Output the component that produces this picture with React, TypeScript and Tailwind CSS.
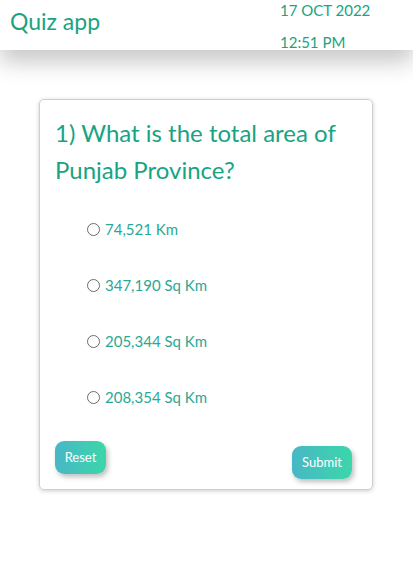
import React from "react";

const options = ["74,521 Km", "347,190 Sq Km", "205,344 Sq Km", "208,354 Sq Km"];

export default function App() {
  return (
    <div className="w-[413px] h-[561px] bg-white" style={{ fontFamily: "Lato, 'Open Sans', sans-serif" }}>
      <header className="h-[50px] flex justify-between bg-white shadow-[0_12px_22px_rgba(0,0,0,0.22)] relative">
        <div className="pl-[10px] pt-[6px] text-[23px] leading-[30px] text-[#17a483]">Quiz app</div>
        <div className="w-[133px] flex flex-col text-[15px] text-[#17a483] leading-[20px]">
          <span className="pt-0">17 OCT 2022</span>
          <span className="pt-[12px]">12:51 PM</span>
        </div>
      </header>
      <div className="pt-[49px] pl-[39px]">
        <div className="w-[334px] h-[391px] border border-[#cfcfcf] rounded-[5px] shadow-[0_1px_4px_rgba(0,0,0,0.2)] flex flex-col px-[15px]">
          <h1 className="mt-[14px] text-[24px] leading-[37px] text-[#17a483]">
            1) What is the total area of Punjab Province?
          </h1>
          <div className="mt-[31px] pl-[32px] flex flex-col gap-[36px]">
            {options.map((o) => (
              <label key={o} className="flex items-center h-[20px] text-[15px] text-[#2aa894]">
                <span className="w-[13px] h-[13px] rounded-full border border-[#6b6b6b] mr-[5px] inline-block" />
                {o}
              </label>
            ))}
          </div>
          <div className="mt-auto mb-[10px] flex justify-between items-end">
            <button className="mb-[5px] w-[51px] h-[33px] rounded-[9px] text-white text-[13px] bg-gradient-to-r from-[#48b7c5] to-[#3cd6a9] shadow-[2px_3px_5px_rgba(0,0,0,0.25)]">
              Reset
            </button>
            <button className="mr-[5px] w-[60px] h-[33px] rounded-[9px] text-white text-[13px] bg-gradient-to-r from-[#48b7c5] to-[#3cd6a9] shadow-[2px_3px_5px_rgba(0,0,0,0.25)]">
              Submit
            </button>
          </div>
        </div>
      </div>
    </div>
  );
}
